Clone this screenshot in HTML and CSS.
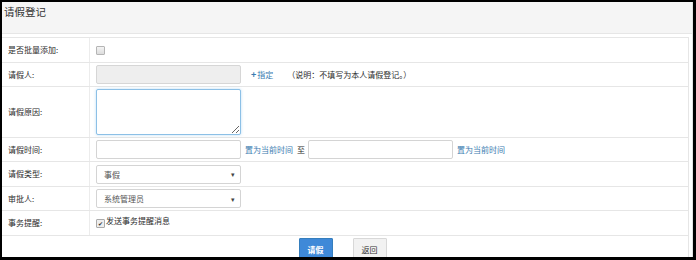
FILE: index.html
```html
<!DOCTYPE html>
<html lang="zh-CN">
<head>
<meta charset="utf-8">
<title>请假登记</title>
<link rel="stylesheet" href="styles.css">
</head>
<body>
<div class="frame">
  <div class="panel">
    <div class="heading">请假登记</div>
    <div class="form">
      <div class="row h24">
        <div class="label">是否批量添加:</div>
        <div class="value"><span class="cb"></span></div>
      </div>
      <div class="row h23">
        <div class="label">请假人:</div>
        <div class="value">
          <input class="input disabled" type="text" disabled>
          <a class="link assign"><span class="plus">+</span>指定</a>
          <span class="note">（说明：不填写为本人请假登记。）</span>
        </div>
      </div>
      <div class="row h50">
        <div class="label">请假原因:</div>
        <div class="value"><textarea class="textarea"></textarea></div>
      </div>
      <div class="row h23">
        <div class="label">请假时间:</div>
        <div class="value">
          <input class="input" type="text">
          <a class="link now">置为当前时间</a>
          <span class="to">至</span>
          <input class="input" type="text">
          <a class="link now">置为当前时间</a>
        </div>
      </div>
      <div class="row h24">
        <div class="label">请假类型:</div>
        <div class="value"><div class="select"><span>事假</span><span class="arrow">▾</span></div></div>
      </div>
      <div class="row h23">
        <div class="label">审批人:</div>
        <div class="value"><div class="select"><span>系统管理员</span><span class="arrow">▾</span></div></div>
      </div>
      <div class="row h24">
        <div class="label">事务提醒:</div>
        <div class="value top"><span class="cb checked">✔</span><span class="cbtext">发送事务提醒消息</span></div>
      </div>
      <div class="actions">
        <button class="btn primary">请假</button>
        <button class="btn">返回</button>
      </div>
    </div>
  </div>
</div>
</body>
</html>
```
FILE: styles.css
```css
html, body {
  margin: 0;
  padding: 0;
  background: #000;
  height: 260px;
  overflow: hidden;
}
body {
  font-family: "Noto Sans CJK SC", "Noto Sans", sans-serif;
  font-size: 8px;
  color: #2b2b2b;
}
.frame {
  margin: 2px 2px 0 2px;
  height: 255px;
  width: 691px;
  background: #fff;
  overflow: hidden;
}
.panel {
  height: 100%;
  width: 690px;
  border-right: 1px solid #e2e2e2;
}
.heading {
  height: 32px;
  background: #f5f5f5;
  border-bottom: 1px solid #e6e6e6;
  font-size: 10.5px;
  line-height: 12px;
  padding: 4px 0 0 2px;
  box-sizing: border-box;
  color: #333;
}
.form {
  margin-top: 3px;
  width: 686px;
  border-top: 1px solid #e6e6e6;
  border-right: 1px solid #e6e6e6;
}
.row {
  display: flex;
  border-bottom: 1px solid #e6e6e6;
}
.h24 { height: 24px; }
.h23 { height: 23px; }
.h50 { height: 50px; }
.label {
  width: 88px;
  border-right: 1px solid #ececec;
  padding-left: 6px;
  box-sizing: border-box;
  display: flex;
  align-items: center;
  line-height: 10px;
}
.value {
  flex: 1;
  display: flex;
  align-items: center;
  padding-left: 6px;
}
.value.top {
  align-items: flex-start;
  padding-top: 4px;
  box-sizing: border-box;
}
.input {
  width: 145px;
  height: 19px;
  box-sizing: border-box;
  border: 1px solid #d4d4d4;
  border-radius: 2px;
  background: #fff;
  padding: 0 4px;
  margin: 0;
  font: inherit;
}
.input.disabled {
  background: #eee;
  border-color: #d6d6d6;
}
.link {
  color: #3a7bb0;
  cursor: pointer;
}
.assign {
  margin-left: 10px;
}
.plus {
  font-weight: bold;
  font-size: 9px;
  margin-right: 1px;
}
.note {
  margin-left: 14px;
}
.now {
  margin-left: 4px;
}
.to {
  margin: 0 3px 0 4px;
}
.textarea {
  width: 145px;
  height: 46px;
  box-sizing: border-box;
  border: 1px solid #8cc0e6;
  border-radius: 2px;
  box-shadow: 0 0 3px rgba(102, 175, 233, 0.45);
  margin: 0;
  padding: 2px;
  font: inherit;
  outline: none;
}
.select {
  width: 145px;
  height: 19px;
  box-sizing: border-box;
  border: 1px solid #d4d4d4;
  border-radius: 2px;
  display: flex;
  align-items: center;
  justify-content: space-between;
  padding: 0 5px 0 7px;
  color: #555;
}
.arrow {
  font-size: 7px;
  color: #444;
}
.cb {
  width: 7px;
  height: 7px;
  border: 1px solid #b5b5b5;
  border-radius: 1px;
  background: linear-gradient(#f4f4f4, #dcdcdc);
  display: inline-flex;
  align-items: center;
  justify-content: center;
  font-size: 6px;
  line-height: 7px;
  color: #333;
  margin-top: 1px;
}
.cb.checked {
  margin-top: 4px;
  border-color: #aaa;
  background: #eee;
}
.cbtext {
  margin-left: 1px;
  line-height: 12px;
}
.actions {
  display: flex;
  justify-content: center;
  gap: 20px;
  padding: 2px 5px 0 0;
}
.btn {
  width: 34px;
  height: 22px;
  margin: 0;
  padding: 0;
  border: 1px solid #d8d8d8;
  background: #f2f2f2;
  font: inherit;
  color: #333;
  border-radius: 1px;
}
.btn.primary {
  background: #3f89d8;
  border-color: #357ebd;
  color: #fff;
  font-weight: bold;
}
```
